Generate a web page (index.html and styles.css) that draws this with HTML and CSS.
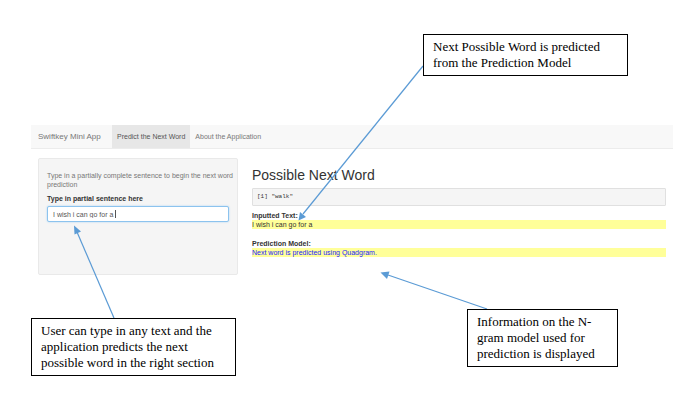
FILE: index.html
```html
<!DOCTYPE html>
<html lang="en">
<head>
<meta charset="utf-8">
<title>Swiftkey Mini App</title>
<link rel="stylesheet" href="styles.css">
</head>
<body>
<div class="app">
  <nav class="navbar">
    <a class="brand" href="#">Swiftkey Mini App</a>
    <a class="tab active" href="#predict">Predict the Next Word</a>
    <a class="tab" href="#about">About the Application</a>
  </nav>
  <div class="content">
    <form class="well">
      <p class="help">Type in a partially complete sentence to begin the next word prediction</p>
      <label for="sentence">Type in partial sentence here</label>
      <div class="field">
        <input id="sentence" type="text" value="I wish i can go for a">
        <span class="caret"></span>
      </div>
    </form>
    <main class="results">
      <h1>Possible Next Word</h1>
      <pre>[1] "walk"</pre>
      <h2>Inputted Text:</h2>
      <p class="mark">I wish i can go for a</p>
      <h2>Prediction Model:</h2>
      <p class="mark model">Next word is predicted using Quadgram.</p>
    </main>
  </div>
</div>
<svg class="arrows" width="682" height="402" viewBox="0 0 682 402" aria-hidden="true">
  <g stroke="#5b9bd5" stroke-width="1.2">
    <path d="M423 66L303 214"/>
    <path d="M114 318L77 232"/>
    <path d="M487 309L388 275"/>
  </g>
  <g fill="#5b9bd5">
    <path d="M298.500 220.500L300 212L306 217Z"/>
    <path d="M74 225.500L81 231.500L74.500 234.500Z"/>
    <path d="M380.500 272.500L389.500 271.500L387 279Z"/>
  </g>
</svg>
<aside class="note note-word">Next Possible Word is predicted from the Prediction Model</aside>
<aside class="note note-input">User can type in any text and the application predicts the next possible word in the right section</aside>
<aside class="note note-model">Information on the N-gram model used for prediction is displayed</aside>
</body>
</html>
```
FILE: styles.css
```css
* {
  box-sizing: border-box;
}

body {
  position: relative;
  min-height: 100vh;
  margin: 0;
  padding: 125px 9px 0 31px;
  background: #fff;
  color: #333;
  font: 7px/9px "Liberation Sans", Arial, sans-serif;
}

.navbar {
  display: flex;
  height: 24px;
  background: #f8f8f8;
  border-bottom: 1px solid #ececec;
}

.navbar a {
  padding: 0 5px;
  color: #777;
  line-height: 24px;
  text-decoration: none;
}

.navbar .brand {
  min-width: 81px;
  padding: 0 7px;
  font-size: 8px;
}

.navbar .active {
  background: #e7e7e7;
  color: #555;
}

.content {
  display: grid;
  grid-template-columns: 200px 1fr;
  gap: 14px;
  padding: 9px 7px 0;
}

.well {
  min-height: 117px;
  padding: 12px 8px;
  background: #f5f5f5;
  border: 1px solid #e9e9e9;
  border-radius: 2px;
}

.help {
  margin: 0 -8px 5px 0;
  color: #777;
}

label {
  display: block;
  margin-bottom: 3px;
  font-weight: bold;
}

.field {
  position: relative;
}

input {
  display: block;
  width: 100%;
  height: 16px;
  padding: 0 5px;
  background: #fff;
  border: 1px solid #8cc3ee;
  border-radius: 2px;
  box-shadow: 0 0 2px #a5d2f5;
  color: #555;
  font: inherit;
  line-height: 14px;
  outline: 0;
}

.caret {
  position: absolute;
  top: 4px;
  left: 68px;
  width: 1px;
  height: 8px;
  background: #555;
}

h1 {
  margin: 9px 0 4px;
  font-size: 14px;
  font-weight: normal;
  line-height: 17px;
}

pre {
  margin: 0 0 5px;
  padding: 4px;
  background: #f5f5f5;
  border: 1px solid #e0e0e0;
  border-radius: 1px;
  font: 6px/8px "Liberation Mono", monospace;
}

h2 {
  margin: 0;
  font-size: 7px;
  line-height: 9px;
}

.mark {
  margin: 0 0 10px;
  background: #ff9;
}

.model {
  color: #22f;
}

.arrows {
  position: absolute;
  top: 0;
  left: 0;
  fill: none;
}

.note {
  position: absolute;
  padding: 4px 9px;
  background: #fff;
  border: 1px solid #000;
  color: #000;
  font: 13px/16px "Liberation Serif", "Times New Roman", serif;
}

.note-word {
  top: 34px;
  left: 423px;
  width: 205px;
}

.note-input {
  top: 318px;
  left: 31px;
  width: 205px;
}

.note-model {
  top: 309px;
  left: 467px;
  width: 151px;
}
```
